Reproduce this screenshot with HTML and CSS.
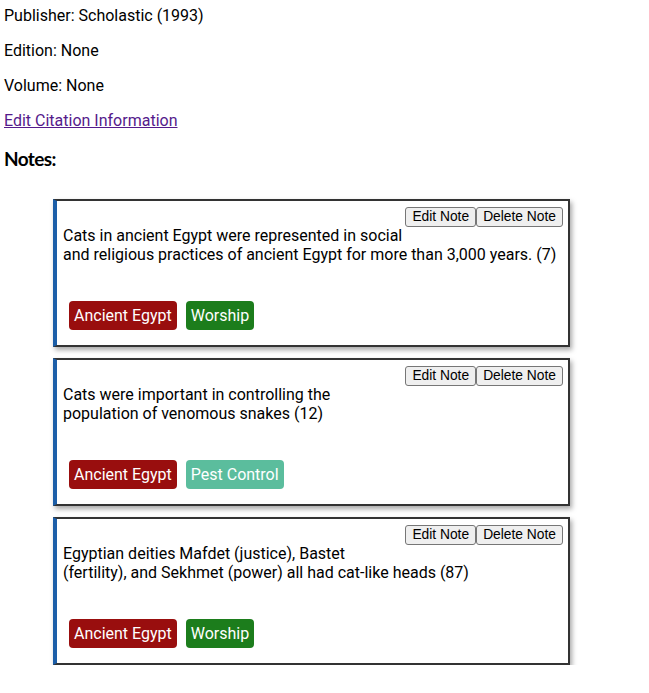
FILE: index.html
```html
<!DOCTYPE html>
<html lang="en">
<head>
<meta charset="utf-8">
<title>Citation</title>
<link rel="stylesheet" href="styles.css">
</head>
<body>
<main class="page">
  <p class="meta">Publisher: Scholastic (1993)</p>
  <p class="meta">Edition: None</p>
  <p class="meta">Volume: None</p>
  <p class="meta"><a class="edit-link" href="#">Edit Citation Information</a></p>
  <h2 class="notes-title">Notes:</h2>
  <div class="notes">
    <div class="note">
      <div class="note-actions"><button class="btn">Edit Note</button><button class="btn">Delete Note</button></div>
      <p class="note-text">Cats in ancient Egypt were represented in social and religious practices of ancient Egypt for more than 3,000 years. (7)</p>
      <div class="tags"><span class="tag tag-red">Ancient Egypt</span><span class="tag tag-green">Worship</span></div>
    </div>
    <div class="note">
      <div class="note-actions"><button class="btn">Edit Note</button><button class="btn">Delete Note</button></div>
      <p class="note-text">Cats were important in controlling the population of venomous snakes (12)</p>
      <div class="tags"><span class="tag tag-red">Ancient Egypt</span><span class="tag tag-teal">Pest Control</span></div>
    </div>
    <div class="note">
      <div class="note-actions"><button class="btn">Edit Note</button><button class="btn">Delete Note</button></div>
      <p class="note-text">Egyptian deities Mafdet (justice), Bastet (fertility), and Sekhmet (power) all had cat-like heads (87)</p>
      <div class="tags"><span class="tag tag-red">Ancient Egypt</span><span class="tag tag-green">Worship</span></div>
    </div>
  </div>
</main>
</body>
</html>
```
FILE: styles.css
```css
html, body {
  margin: 0;
  padding: 0;
  background: #fff;
}

body {
  font-family: Roboto, "Liberation Sans", sans-serif;
  font-size: 16px;
  color: #000;
}

.page {
  padding: 6px 4px 0 4px;
}

.meta {
  margin: 0 0 16px 0;
  line-height: 19px;
}

.edit-link {
  color: #551a8b;
  text-decoration: underline;
}

.notes-title {
  font-family: Lato, "Noto Sans", sans-serif;
  font-weight: 700;
  font-size: 19px;
  letter-spacing: -0.6px;
  line-height: 24px;
  margin: 17px 0 28px 0;
}

.notes {
  display: flex;
  flex-direction: column;
  gap: 11px;
  margin-left: 49px;
}

.note {
  box-sizing: border-box;
  width: 517px;
  background: #fff;
  border: 2px solid #333;
  border-left: 4px solid #1c5ea8;
  padding: 6px 5px 15px 6px;
  box-shadow: 2px 3px 5px rgba(0, 0, 0, 0.35);
}

.note-actions {
  float: right;
  display: flex;
}

.btn {
  font-family: "Liberation Sans", Arial, sans-serif;
  font-size: 13.8px;
  line-height: 16px;
  height: 20px;
  padding: 1px 6px;
  margin: 0;
  color: #000;
  background: #efefef;
  border: 1px solid #767676;
  border-radius: 3px;
}

.note-text {
  margin: 19px 0 0 0;
  line-height: 19px;
}

.tags {
  clear: both;
  display: flex;
  gap: 9px;
  margin: 37px 0 0 6px;
}

.tag {
  color: #fff;
  padding: 5px 5px;
  line-height: 19px;
  border-radius: 4px;
}

.tag-red {
  background: #990e0e;
}

.tag-green {
  background: #1c7d1c;
}

.tag-teal {
  background: #5bbd9d;
}
```
